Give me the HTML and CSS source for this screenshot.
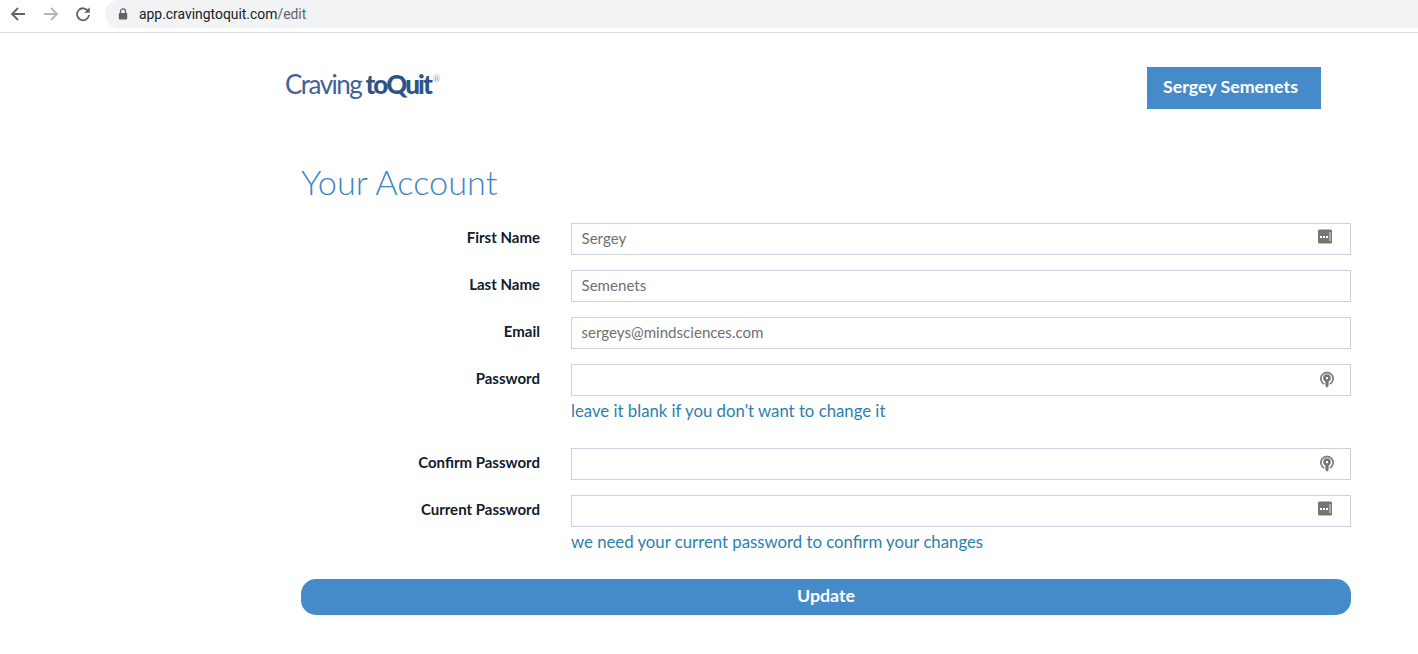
FILE: index.html
```html
<!DOCTYPE html>
<html lang="en">
<head>
    <meta charset="UTF-8">
    <title>Your Account</title>
    <link rel="stylesheet" href="styles.css">
</head>
<body>
    <div class="browser-bar">
        <div class="nav-buttons">
            <svg class="nav-icon" viewBox="0 0 16 16"><path d="M15 8H2.5M8 2 2 8l6 6" fill="none" stroke="#5f6368" stroke-width="1.8"/></svg>
            <svg class="nav-icon" viewBox="0 0 16 16"><path d="M1 8h12.5M8 2l6 6-6 6" fill="none" stroke="#b4b6b9" stroke-width="1.8"/></svg>
            <svg class="nav-icon" viewBox="0 0 16 16"><path d="M13.2 5.2A6 6 0 1 0 14 9" fill="none" stroke="#5f6368" stroke-width="1.8"/><path d="M14.8 1.2v5.6H9.2z" fill="#5f6368"/></svg>
        </div>
        <div class="address">
            <svg class="lock" viewBox="0 0 10 12"><path d="M2.5 5V3.4a2.5 2.5 0 0 1 5 0V5" fill="none" stroke="#5f6368" stroke-width="1.3"/><rect x="0.8" y="5" width="8.4" height="6.5" rx="1" fill="#5f6368"/></svg>
            <span class="url">app.cravingtoquit.com<span class="url-path">/edit</span></span>
        </div>
    </div>

    <div class="page">
        <header class="top">
            <div class="logo">Craving<b>toQuit</b><sup>®</sup></div>
            <a class="user-button">Sergey Semenets</a>
        </header>

        <h1>Your Account</h1>

        <form class="account-form">
            <div class="row">
                <label>First Name</label>
                <div class="field">
                    <div class="input">Sergey
                        <svg class="field-icon dots-icon" viewBox="0 0 14 15"><rect y="0.5" width="14" height="14" rx="1.5" fill="#757575"/><path d="M2 7h2v2H2zM5 7h2v2H5zM8 7h2v2H8z" fill="#fff"/><path d="M11.5 3h1v9h-1z" fill="#e4e4e4"/></svg>
                    </div>
                </div>
            </div>
            <div class="row">
                <label>Last Name</label>
                <div class="field"><div class="input">Semenets</div></div>
            </div>
            <div class="row">
                <label>Email</label>
                <div class="field"><div class="input">sergeys@mindsciences.com</div></div>
            </div>
            <div class="row has-hint">
                <label>Password</label>
                <div class="field">
                    <div class="input">
                        <svg class="field-icon key-icon" viewBox="0 0 14 18"><path d="M4.2 13a6.1 6.1 0 1 1 5.6 0" fill="none" stroke="#808080" stroke-width="1.8"/><circle cx="7" cy="7" r="3.8" fill="#757575"/><path d="M5.4 10h3.2v4.5L7 17l-1.6-2.5z" fill="#757575"/><rect x="6" y="6" width="2" height="2.2" fill="#fff"/></svg>
                    </div>
                    <p class="hint">leave it blank if you don't want to change it</p>
                </div>
            </div>
            <div class="row">
                <label>Confirm Password</label>
                <div class="field">
                    <div class="input">
                        <svg class="field-icon key-icon" viewBox="0 0 14 18"><path d="M4.2 13a6.1 6.1 0 1 1 5.6 0" fill="none" stroke="#808080" stroke-width="1.8"/><circle cx="7" cy="7" r="3.8" fill="#757575"/><path d="M5.4 10h3.2v4.5L7 17l-1.6-2.5z" fill="#757575"/><rect x="6" y="6" width="2" height="2.2" fill="#fff"/></svg>
                    </div>
                </div>
            </div>
            <div class="row has-hint">
                <label>Current Password</label>
                <div class="field">
                    <div class="input">
                        <svg class="field-icon dots-icon" viewBox="0 0 14 15"><rect y="0.5" width="14" height="14" rx="1.5" fill="#757575"/><path d="M2 7h2v2H2zM5 7h2v2H5zM8 7h2v2H8z" fill="#fff"/><path d="M11.5 3h1v9h-1z" fill="#e4e4e4"/></svg>
                    </div>
                    <p class="hint">we need your current password to confirm your changes</p>
                </div>
            </div>
            <button type="button" class="update">Update</button>
        </form>
    </div>
</body>
</html>
```

FILE: styles.css
```css
body {
    margin: 0;
    background: white;
    font-family: Lato, "Open Sans", sans-serif;
    color: #10202e;
}

.browser-bar {
    display: flex;
    height: 32px;
    border-bottom: 1px solid #dadce0;
    align-items: flex-start;
}
.nav-buttons {
    display: flex;
    gap: 16.5px;
    padding: 6px 0 0 10px;
    width: 95px;
}
.nav-icon {
    width: 16px;
    height: 16px;
}
.address {
    flex: 1;
    height: 28px;
    display: flex;
    align-items: center;
    background: #f1f3f4;
    border-radius: 14px 0 0 14px;
    padding-left: 13px;
    font-family: Roboto, sans-serif;
    font-size: 13.9px;
}
.lock {
    width: 10px;
    height: 12px;
    margin-right: 11px;
}
.url {
    color: #202124;
}
.url-path {
    color: #5f6368;
}

.page {
    width: 1050px;
    margin-left: 301px;
}
.top {
    display: flex;
    justify-content: space-between;
    height: 76px;
    padding-top: 34px;
}
.logo {
    margin: -1px 0 0 -16px;
    font-size: 26px;
    line-height: 36px;
    letter-spacing: -1.5px;
    color: #3f6198;
    font-weight: 400;
}
.logo b {
    font-weight: 900;
    color: #2f5288;
    margin-left: 4px;
    letter-spacing: -1.9px;
}
.logo sup {
    font-size: 9px;
    color: #8fa3c2;
    vertical-align: 12px;
    line-height: 0;
    letter-spacing: 0;
    margin-left: 2px;
}
.user-button {
    width: 174px;
    height: 42px;
    margin-right: 30px;
    background: #468bc9;
    color: white;
    font-weight: 700;
    font-size: 17.8px;
    line-height: 39px;
    padding-left: 16px;
    box-sizing: border-box;
}

h1 {
    margin: 0;
    padding-top: 16px;
    height: 41px;
    font-size: 34.3px;
    line-height: 45px;
    font-weight: 300;
    color: #3f86c8;
}

.account-form {
    display: flex;
    flex-direction: column;
    gap: 15px;
    margin-top: 23px;
}
.row {
    display: flex;
    gap: 31px;
}
.row label {
    width: 239px;
    text-align: right;
    font-size: 15px;
    font-weight: 700;
    line-height: 28px;
}
.field {
    flex: 1;
}
.input {
    position: relative;
    height: 32px;
    box-sizing: border-box;
    border: 1px solid #ccd0e0;
    padding-left: 9.5px;
    font-size: 15.1px;
    line-height: 28px;
    color: #707070;
}
.field-icon {
    position: absolute;
}
.dots-icon {
    right: 18px;
    top: 5px;
    width: 14px;
    height: 15px;
}
.key-icon {
    right: 16px;
    top: 6px;
    width: 14px;
    height: 18px;
}
.hint {
    margin: 5px 0 0;
    font-size: 16.75px;
    line-height: 20px;
    color: #2b7fae;
}
.row.has-hint {
    margin-bottom: 12px;
}
.update {
    height: 36px;
    border: none;
    border-radius: 15px;
    background: #468bc9;
    color: white;
    font-family: inherit;
    font-size: 17.8px;
    font-weight: 700;
    padding-bottom: 5px;
}
```
